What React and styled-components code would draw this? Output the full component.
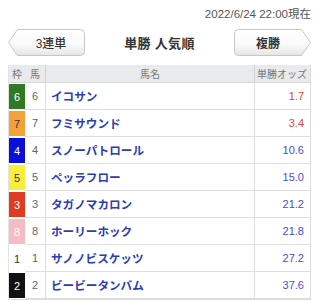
import React from "react";
import styled, { createGlobalStyle } from "styled-components";

const Global = createGlobalStyle`
  html, body { margin: 0; padding: 0; background: #fff; }
  body { font-family: "Liberation Sans", "Noto Sans CJK JP", sans-serif; }
`;

const Page = styled.div`
  width: 320px;
  padding: 7px 9px 0 8px;
  box-sizing: border-box;
`;

const Stamp = styled.div`
  text-align: right;
  font-size: 11.5px;
  line-height: 14px;
  color: #555;
`;

const TopBar = styled.div`
  margin-top: 8px;
  display: flex;
  align-items: center;
  justify-content: space-between;
  height: 27px;
`;

const NavButton = styled.div`
  position: relative;
  width: 77px;
  height: 27px;
  display: flex;
  align-items: center;
  justify-content: center;
  padding: ${(p) => (p.$dir === "left" ? "0 0 0 9px" : "0 9px 0 0")};
  box-sizing: border-box;
  font-size: 12px;
  font-weight: ${(p) => (p.$bold ? 700 : 500)};
  color: #333;
  cursor: pointer;
`;

const Shape = styled.svg`
  position: absolute;
  inset: 0;
  width: 77px;
  height: 27px;
  z-index: 0;
`;

const Label = styled.span`
  position: relative;
  z-index: 1;
`;

const Title = styled.div`
  font-size: 13px;
  font-weight: 700;
  color: #333;
  letter-spacing: 0.3px;
`;

const Table = styled.div`
  margin-top: 9px;
  border-left: 1px solid #e2e2e2;
  border-right: 1px solid #dcdcdc;
  border-bottom: 1px solid #dcdcdc;
`;

const Row = styled.div`
  display: grid;
  grid-template-columns: 16px 20px 1fr 56px;
  height: ${(p) => (p.$head ? "17px" : "26px")};
  border-bottom: 1px solid ${(p) => (p.$head ? "#d6d8da" : "#dedede")};
  background: ${(p) => (p.$head ? "#e8eaec" : "#fff")};
  box-sizing: content-box;
`;

const HeadCell = styled.div`
  display: flex;
  align-items: center;
  justify-content: ${(p) => p.$align || "center"};
  padding: 0 ${(p) => (p.$align === "flex-end" ? "3px" : "0")};
  font-size: 10px;
  white-space: nowrap;
  overflow: hidden;
  color: #777;
  border-left: ${(p) => (p.$sep ? "1px solid #d0d2d4" : "none")};
`;

const Waku = styled.div`
  display: flex;
  align-items: center;
  justify-content: center;
  margin: 1px 0 -1px 0;
  border-bottom: 1px solid #fff;
  background: ${(p) => p.$bg};
  color: ${(p) => p.$fg};
  font-size: 11px;
  position: relative;
`;

const Num = styled.div`
  display: flex;
  align-items: center;
  justify-content: center;
  font-size: 11px;
  color: #666;
`;

const Name = styled.div`
  display: flex;
  align-items: center;
  padding-left: 5px;
  border-left: 1px solid #dedede;
  font-size: 11.6px;
  font-weight: 700;
  color: #2b3db3;
`;

const Odds = styled.div`
  display: flex;
  align-items: center;
  justify-content: flex-end;
  padding-right: 6px;
  border-left: 1px solid #dedede;
  font-size: 11px;
  color: ${(p) => (p.$hot ? "#d9443f" : "#4b4bcf")};
`;

const WAKU = {
  1: ["#ffffff", "#333"],
  2: ["#111111", "#fff"],
  3: ["#e03a22", "#fff"],
  4: ["#0a10d8", "#fff"],
  5: ["#f6ee3a", "#333"],
  6: ["#2f7a22", "#fff"],
  7: ["#f3a23a", "#333"],
  8: ["#f5bcc4", "#fff"],
};

const horses = [
  { w: 6, n: 6, name: "イコサン", odds: "1.7" },
  { w: 7, n: 7, name: "フミサウンド", odds: "3.4" },
  { w: 4, n: 4, name: "スノーパトロール", odds: "10.6" },
  { w: 5, n: 5, name: "ペッラフロー", odds: "15.0" },
  { w: 3, n: 3, name: "タガノマカロン", odds: "21.2" },
  { w: 8, n: 8, name: "ホーリーホック", odds: "21.8" },
  { w: 1, n: 1, name: "サノノビスケッツ", odds: "27.2" },
  { w: 2, n: 2, name: "ビービータンバム", odds: "37.6" },
];

function ButtonShape({ dir, id }) {
  const d =
    dir === "left"
      ? "M9.5,0.5 H72.5 Q76.5,0.5 76.5,4.5 V22.5 Q76.5,26.5 72.5,26.5 H9.5 L0.5,13.5 Z"
      : "M4.5,0.5 H67.5 L76.5,13.5 L67.5,26.5 H4.5 Q0.5,26.5 0.5,22.5 V4.5 Q0.5,0.5 4.5,0.5 Z";
  return (
    <Shape viewBox="0 0 77 27">
      <defs>
        <linearGradient id={id} x1="0" y1="0" x2="0" y2="1">
          <stop offset="0" stopColor="#ffffff" />
          <stop offset="0.55" stopColor="#fafafa" />
          <stop offset="1" stopColor="#e6e6e6" />
        </linearGradient>
      </defs>
      <path d={d} fill={`url(#${id})`} stroke="#c6c6c6" strokeWidth="1" />
    </Shape>
  );
}

export default function App() {
  return (
    <>
      <Global />
      <Page>
        <Stamp>2022/6/24 22:00現在</Stamp>
        <TopBar>
          <NavButton $dir="left">
            <ButtonShape dir="left" id="gl" />
            <Label>3連単</Label>
          </NavButton>
          <Title>単勝 人気順</Title>
          <NavButton $dir="right" $bold>
            <ButtonShape dir="right" id="gr" />
            <Label>複勝</Label>
          </NavButton>
        </TopBar>
        <Table>
          <Row $head>
            <HeadCell>枠</HeadCell>
            <HeadCell>馬</HeadCell>
            <HeadCell $sep>馬名</HeadCell>
            <HeadCell $sep $align="flex-end">単勝オッズ</HeadCell>
          </Row>
          {horses.map((h) => (
            <Row key={h.n}>
              <Waku $bg={WAKU[h.w][0]} $fg={WAKU[h.w][1]}>{h.w}</Waku>
              <Num>{h.n}</Num>
              <Name>{h.name}</Name>
              <Odds $hot={parseFloat(h.odds) < 10}>{h.odds}</Odds>
            </Row>
          ))}
        </Table>
      </Page>
    </>
  );
}
